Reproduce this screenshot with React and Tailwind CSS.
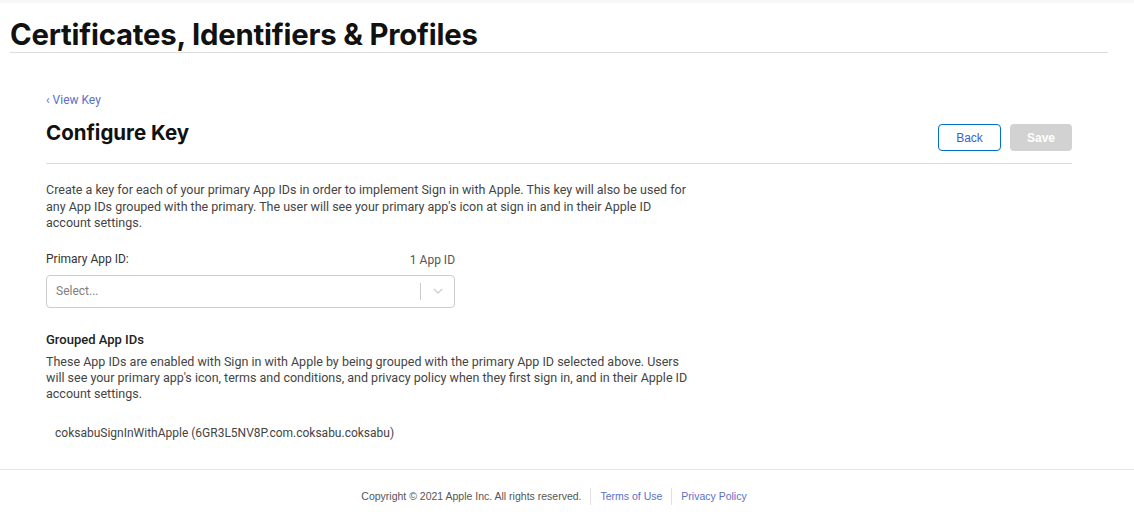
import React from "react";

function Chevron() {
  return (
    <svg width="14" height="14" viewBox="0 0 20 20" className="text-[#c8c8c8]">
      <path d="M4.5 7.5 10 13l5.5-5.5" fill="none" stroke="currentColor" strokeWidth="1.6" strokeLinecap="round" strokeLinejoin="round" />
    </svg>
  );
}

export default function App() {
  return (
    <div className="min-h-[521px] bg-white font-['Roboto',sans-serif] text-[#333]">
      <div className="h-[3px] bg-[#f7f7f7]" />
      <div className="ml-[10px] w-[1098px] border-b border-[#dcdcdc] pt-[16px] pb-[2px]">
        <h1 className="font-['Inter',sans-serif] text-[29.3px] font-bold leading-[31px] tracking-[-0.2px] text-[#111]">
          Certificates, Identifiers &amp; Profiles
        </h1>
      </div>

      <div className="ml-[46px] w-[1026px] pt-[40px]">
        <a className="block text-[12px] leading-[14px] text-[#5b6fc7]">‹ View Key</a>
        <div className="mt-[14px] flex items-end justify-between border-b border-[#dcdcdc] pb-[12px]">
          <h2 className="mb-[6px] font-['Inter',sans-serif] text-[20.5px] font-bold leading-[24px] text-[#111]">
            Configure Key
          </h2>
          <div className="flex gap-[9px]">
            <button className="h-[27px] w-[63px] rounded-[4px] border border-[#0070c9] bg-white font-['Liberation_Sans',sans-serif] text-[12px] text-[#3a62c4]">
              Back
            </button>
            <button className="h-[27px] w-[62px] rounded-[4px] bg-[#d2d2d2] font-['Liberation_Sans',sans-serif] text-[12px] font-bold text-white">
              Save
            </button>
          </div>
        </div>

        <p className="mt-[18px] w-[645px] text-[12.5px] leading-[16.5px] text-[#444]">
          Create a key for each of your primary App IDs in order to implement Sign in with Apple. This key will also be used for any App IDs grouped with the primary. The user will see your primary app's icon at sign in and in their Apple ID account settings.
        </p>

        <div className="mt-[19px] w-[409px]">
          <div className="flex items-end justify-between">
            <span className="text-[12px] leading-[16px] text-[#333]">Primary App ID:</span>
            <span className="text-[12px] leading-[14px] text-[#555]">1 App ID</span>
          </div>
          <div className="mt-[8px] flex h-[33px] items-center rounded-[4px] border border-[#cccccc] bg-white">
            <span className="flex-1 pl-[9px] text-[12px] text-[#808080]">Select...</span>
            <span className="h-[17px] w-px bg-[#cccccc]" />
            <span className="flex w-[33px] items-center justify-center">
              <Chevron />
            </span>
          </div>
        </div>

        <h3 className="mt-[23px] text-[13px] font-medium leading-[18px] text-[#222]">Grouped App IDs</h3>
        <p className="mt-[5px] w-[645px] text-[12.5px] leading-[16px] text-[#444]">
          These App IDs are enabled with Sign in with Apple by being grouped with the primary App ID selected above. Users will see your primary app's icon, terms and conditions, and privacy policy when they first sign in, and in their Apple ID account settings.
        </p>
        <div className="mt-[23px] pl-[9px] text-[12px] leading-[16px] text-[#444]">
          coksabuSignInWithApple (6GR3L5NV8P.com.coksabu.coksabu)
        </div>
      </div>

      <footer className="mt-[28px] border-t border-[#e5e5e5] pt-[18px] pb-[15px]">
        <div className="flex w-[1108px] items-center justify-center font-['Liberation_Sans',sans-serif] text-[10.5px] leading-[12px]">
          <span className="pr-[9px] text-[#555]">Copyright © 2021 Apple Inc. All rights reserved.</span>
          <span className="h-[17px] w-px bg-[#e0e0e0]" />
          <a className="px-[9px] text-[#5b6fc7]">Terms of Use</a>
          <span className="h-[17px] w-px bg-[#e0e0e0]" />
          <a className="pl-[9px] text-[#5b6fc7]">Privacy Policy</a>
        </div>
      </footer>
    </div>
  );
}
